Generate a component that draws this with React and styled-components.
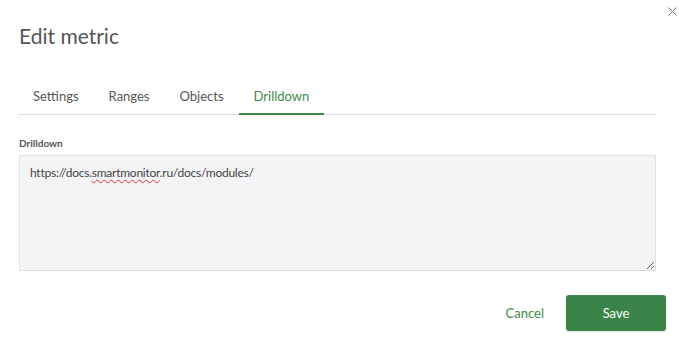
import React from "react";
import styled, { createGlobalStyle } from "styled-components";

const Global = createGlobalStyle`
  html, body { margin: 0; padding: 0; background: #fff; }
  body { font-family: Lato, "Open Sans", sans-serif; }
  * { box-sizing: border-box; }
`;

const Dialog = styled.div`
  position: relative;
  width: 679px;
  height: 345px;
  background: #fff;
  display: flex;
  flex-direction: column;
`;

const Close = styled.button`
  position: absolute;
  top: 6px;
  right: 1px;
  width: 11px;
  height: 11px;
  padding: 0;
  border: 0;
  background: none;
  display: flex;
  align-items: center;
  justify-content: center;
  cursor: pointer;
`;

const Title = styled.h2`
  margin: 0;
  padding: 21px 19px 0;
  font-size: 21px;
  line-height: 30px;
  font-weight: 400;
  color: #555;
`;

const TabList = styled.div`
  display: flex;
  margin: 31px 23px 0 18px;
  border-bottom: 1px solid #dcdcdc;
`;

const Tab = styled.div`
  padding: 5px 15px 8px;
  font-size: 13px;
  line-height: 18px;
  color: ${(p) => (p.$active ? "#3d8a4a" : "#555")};
  border-bottom: 2px solid ${(p) => (p.$active ? "#3d8a4a" : "transparent")};
  margin-bottom: -1px;
  cursor: pointer;
`;

const Field = styled.div`
  display: flex;
  flex-direction: column;
  margin: 21px 23px 0 19px;
`;

const Label = styled.label`
  font-size: 10px;
  font-weight: 700;
  line-height: 14px;
  color: #555;
  margin-bottom: 5px;
`;

const TextBox = styled.div`
  height: 116px;
  background: #f3f4f5;
  border: 1px solid #dfe0e1;
  padding: 8px 10px;
  font-size: 12px;
  letter-spacing: -0.25px;
  line-height: 18px;
  color: #444;
  resize: vertical;
  overflow: auto;
  outline: none;
`;

const Misspelled = styled.span`
  text-decoration: underline wavy #e0312b;
  text-decoration-thickness: 1px;
  text-underline-offset: 2px;
`;

const Footer = styled.div`
  display: flex;
  justify-content: flex-end;
  align-items: center;
  gap: 22px;
  margin: 24px 13px 0 0;
`;

const LinkButton = styled.button`
  border: 0;
  background: none;
  padding: 0;
  font-family: inherit;
  font-size: 13px;
  color: #3d8a4a;
  cursor: pointer;
`;

const PrimaryButton = styled.button`
  width: 100px;
  height: 36px;
  border: 0;
  border-radius: 3px;
  background: #3a8447;
  color: #fff;
  font-family: inherit;
  font-size: 13px;
  cursor: pointer;
  box-shadow: 0 1px 2px rgba(0, 0, 0, 0.12);
`;

export default function App() {
  const tabs = ["Settings", "Ranges", "Objects", "Drilldown"];
  return (
    <>
      <Global />
      <Dialog>
        <Close aria-label="Close">
          <svg width="9" height="9" viewBox="0 0 9 9">
            <path d="M0.5 0.5 L8.5 8.5 M8.5 0.5 L0.5 8.5" stroke="#777" strokeWidth="1" fill="none" />
          </svg>
        </Close>
        <Title>Edit metric</Title>
        <TabList>
          {tabs.map((t) => (
            <Tab key={t} $active={t === "Drilldown"}>
              {t}
            </Tab>
          ))}
        </TabList>
        <Field>
          <Label>Drilldown</Label>
          <TextBox>
            https://docs.<Misspelled>smartmonitor</Misspelled>.ru/docs/modules/
          </TextBox>
        </Field>
        <Footer>
          <LinkButton>Cancel</LinkButton>
          <PrimaryButton>Save</PrimaryButton>
        </Footer>
      </Dialog>
    </>
  );
}
